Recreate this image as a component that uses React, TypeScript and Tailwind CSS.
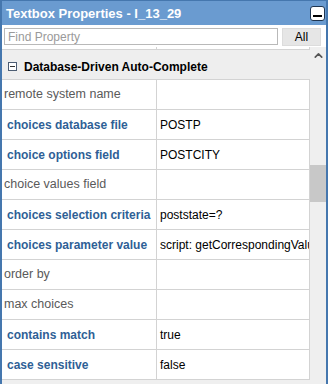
import { ChevronUp } from "lucide-react";

type Prop = { label: string; value?: string; set?: boolean };

const props: Prop[] = [
  { label: "remote system name" },
  { label: "choices database file", value: "POSTP", set: true },
  { label: "choice options field", value: "POSTCITY", set: true },
  { label: "choice values field" },
  { label: "choices selection criteria", value: "poststate=?", set: true },
  { label: "choices parameter value", value: "script: getCorrespondingValue", set: true },
  { label: "order by" },
  { label: "max choices" },
  { label: "contains match", value: "true", set: true },
  { label: "case sensitive", value: "false", set: true },
];

function MinimizeButton() {
  return (
    <div className="w-[15px] h-[15px] rounded-[3px] border border-[#1f3550] bg-white flex items-end justify-center pb-[3px]">
      <div className="w-[9px] h-[2px] bg-black" />
    </div>
  );
}

function CollapseIcon() {
  return (
    <div className="w-[9px] h-[9px] border border-[#4d5d73] bg-white flex items-center justify-center">
      <div className="w-[5px] h-[1px] bg-[#333]" />
    </div>
  );
}

export default function App() {
  return (
    <div
      className="w-[328px] h-[384px] flex flex-col border-x-2 border-t border-[#4577ae] bg-white overflow-hidden"
      style={{ fontFamily: '"Liberation Sans", Arial, sans-serif' }}
    >
      {/* title bar */}
      <div className="h-[24px] shrink-0 bg-[#6a9bd0] flex items-center justify-between pl-[4px] pr-[1px]">
        <span className="text-white font-bold text-[13px] leading-none">Textbox Properties - I_13_29</span>
        <MinimizeButton />
      </div>

      {/* search */}
      <div className="h-[22px] shrink-0 flex items-start gap-[4px] pl-[2px] pr-[5px] pt-[3px]">
        <div className="flex-1 h-[17px] border border-[#b9b9b9] bg-white flex items-center px-[3px] text-[12px] text-[#9a9a9a]">
          Find Property
        </div>
        <div className="w-[39px] h-[18px] bg-[#e6e6e6] border border-[#dcdcdc] flex items-center justify-center text-[12px] text-black">
          All
        </div>
      </div>

      {/* body */}
      <div className="flex-1 flex min-h-0">
        <div className="flex-1 min-w-0 flex flex-col bg-[#efefef]">
          {/* clipped previous row */}
          <div className="h-[3px] shrink-0 flex border-b border-[#d3d3d3] bg-white">
            <div className="w-[155px] border-r border-[#d3d3d3]" />
            <div className="flex-1 border-r border-[#d3d3d3]" />
          </div>
          {/* group header */}
          <div className="h-[30px] shrink-0 bg-[#eeeeee] flex items-center gap-[7px] pl-[6px] pt-[4px] border-b border-[#d3d3d3]">
            <CollapseIcon />
            <span className="text-[12px] font-bold text-black">Database-Driven Auto-Complete</span>
          </div>
          {props.map((p) => (
            <div key={p.label} className="h-[30px] shrink-0 flex bg-white border-b border-[#d3d3d3]">
              <div
                className={`w-[155px] shrink-0 border-r border-[#d3d3d3] flex items-center whitespace-nowrap overflow-hidden ${
                  p.set ? "pl-[5px] text-[12px] font-bold text-[#2f5f96]" : "pl-[2px] text-[12.5px] text-[#5a5a5a]"
                }`}
              >
                {p.label}
              </div>
              <div className="flex-1 min-w-0 border-r border-[#d3d3d3] flex items-center pl-[3px] text-[12px] text-black whitespace-nowrap overflow-hidden">
                {p.value}
              </div>
            </div>
          ))}
        </div>

        {/* scrollbar */}
        <div className="w-[16px] shrink-0 bg-[#efefef] flex flex-col items-center">
          <ChevronUp className="mt-[2px] text-[#555]" size={13} strokeWidth={3} />
          <div className="mt-[103px] w-full h-[37px] bg-[#c8c8c8]" />
        </div>
      </div>
    </div>
  );
}
